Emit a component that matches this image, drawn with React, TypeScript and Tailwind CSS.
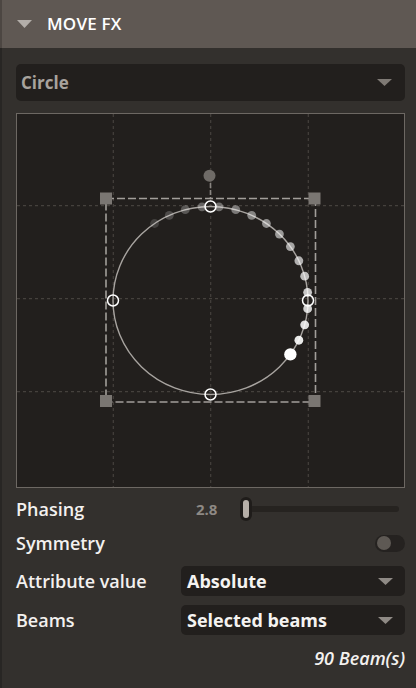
import React from "react";

const font = { fontFamily: '"Open Sans", "Liberation Sans", sans-serif' };

// small downward triangle used on the dropdowns
const Caret = ({ color = "#8f8a85" }: { color?: string }) => (
  <svg width="15" height="7" viewBox="0 0 15 7">
    <polygon points="0,0 15,0 7.5,7" fill={color} />
  </svg>
);

const Dropdown = ({ label }: { label: string }) => (
  <div className="flex h-[30px] flex-1 items-center justify-between rounded-[5px] bg-[#221f1d] pl-[6px] pr-[12px]">
    <span className="text-[18px] font-bold text-[#f5f3f1]">{label}</span>
    <Caret />
  </div>
);

// canvas origin is at (17,114) in page coordinates
const OX = 17;
const OY = 114;
const CX = 210.5 - OX;
const CY = 300.5 - OY;
const RX = 97.5;
const RY = 94;

const MoveCanvas = () => {
  const dots = Array.from({ length: 17 }, (_, i) => {
    const a = ((-125 + i * 10) * Math.PI) / 180;
    const t = i / 16;
    return {
      x: CX + RX * Math.cos(a),
      y: CY + RY * Math.sin(a),
      r: i === 16 ? 6.2 : 4.4,
      o: i === 16 ? 1 : 0.15 + t * 0.8,
    };
  });
  const gx = [113.3 - OX, 210.7 - OX, 308.3 - OX];
  const gy = [205.7 - OY, 298.7 - OY, 391.7 - OY];
  const L = 106 - OX;
  const R = 315.5 - OX;
  const T = 198.5 - OY;
  const B = 402 - OY;

  return (
    <div className="mt-[12px] h-[375px] border border-[#6d6863] bg-[#221f1d]">
      <svg width="388" height="373" viewBox="0 0 388 373" className="block">
        {gx.map((x) => (
          <line key={"v" + x} x1={x} y1={0} x2={x} y2={373} stroke="#45413d" strokeWidth="1.2" strokeDasharray="3 3" />
        ))}
        {gy.map((y) => (
          <line key={"h" + y} x1={0} y1={y} x2={388} y2={y} stroke="#45413d" strokeWidth="1.2" strokeDasharray="3 3" />
        ))}
        {/* rotation handle */}
        <line x1={CX} y1={176 - OY} x2={CX} y2={T} stroke="#8a8682" strokeWidth="1.6" strokeDasharray="5 2" />
        <circle cx={209.5 - OX} cy={175.8 - OY} r="6" fill="#6f6b67" />
        {/* bounding box */}
        <rect x={L} y={T} width={R - L} height={B - T} fill="none" stroke="#a29e9a" strokeWidth="1.6" strokeDasharray="8 3" />
        {[
          [106, 198.5],
          [314.5, 198.5],
          [106, 401],
          [314.5, 401],
        ].map(([x, y]) => (
          <rect key={x + "-" + y} x={x - OX - 6} y={y - OY - 6} width="12" height="12" fill="#7a7672" />
        ))}
        {/* path */}
        <ellipse cx={CX} cy={CY} rx={RX} ry={RY} fill="none" stroke="#a8a4a0" strokeWidth="1.4" />
        {dots.map((d, i) => (
          <circle key={i} cx={d.x} cy={d.y} r={d.r} fill="#ffffff" opacity={d.o} />
        ))}
        {[
          [CX, CY - RY],
          [CX, CY + RY],
          [CX - RX, CY],
          [CX + RX, CY],
        ].map(([x, y]) => (
          <circle key={x + ":" + y} cx={x} cy={y} r="5.5" fill="none" stroke="#ffffff" strokeWidth="1.5" />
        ))}
      </svg>
    </div>
  );
};

export default function App() {
  return (
    <div className="h-[688px] w-[416px] overflow-hidden bg-[#33302d]" style={font}>
      {/* header */}
      <div className="flex h-[48px] items-center border-l-2 border-black/20 bg-[#5f5853] pl-[15px]">
        <svg width="15" height="8" viewBox="0 0 15 8" className="mr-[15px]">
          <polygon points="0,0 15,0 7.5,8" fill="#b3aea9" />
        </svg>
        <span className="text-[17px] font-semibold tracking-[0.2px] text-white">MOVE FX</span>
      </div>

      <div className="h-[640px] border-l-2 border-black/20 pl-[14px] pr-[11px] pt-[16px]">
        {/* shape selector */}
        <div className="flex h-[37px] items-center justify-between rounded-[5px] bg-[#221f1d] pl-[5px] pr-[13px]">
          <span className="text-[17px] font-bold text-[#a8a39d]">Circle</span>
          <Caret color="#7f7a75" />
        </div>

        <MoveCanvas />

        {/* phasing */}
        <div className="mt-[8px] flex h-[26px] items-center text-[18px] font-semibold text-[#f3f1ef]">
          <span className="w-[180px]">Phasing</span>
          <span className="w-[44px] text-[15px] font-bold text-[#8e8984]">2.8</span>
          <div className="relative flex h-[24px] flex-1 items-center">
            <div className="ml-[10px] h-[6px] w-[149px] rounded-full bg-[#262320]" />
            <div className="absolute left-0 top-0 h-[24px] w-[12px] rounded-[6px] border-[3px] border-[#1f1c1a] bg-[#b6afa8]" />
          </div>
        </div>

        {/* symmetry */}
        <div className="mt-[8px] flex h-[26px] items-center justify-between text-[18px] font-semibold text-[#f3f1ef]">
          <span>Symmetry</span>
          <div className="flex h-[17px] w-[30px] items-center rounded-full bg-[#252220] pl-[2px]">
            <div className="h-[14px] w-[14px] rounded-full bg-[#5e5954]" />
          </div>
        </div>

        {/* attribute value */}
        <div className="mt-[10px] flex h-[30px] items-center text-[18px] font-semibold text-[#f3f1ef]">
          <span className="w-[165px]">Attribute value</span>
          <Dropdown label="Absolute" />
        </div>

        {/* beams */}
        <div className="mt-[9px] flex h-[30px] items-center text-[18px] font-semibold text-[#f3f1ef]">
          <span className="w-[165px]">Beams</span>
          <Dropdown label="Selected beams" />
        </div>

        <div className="mt-[10px] text-right text-[18px] font-semibold italic text-[#f3f1ef]">90 Beam(s)</div>
      </div>
    </div>
  );
}
